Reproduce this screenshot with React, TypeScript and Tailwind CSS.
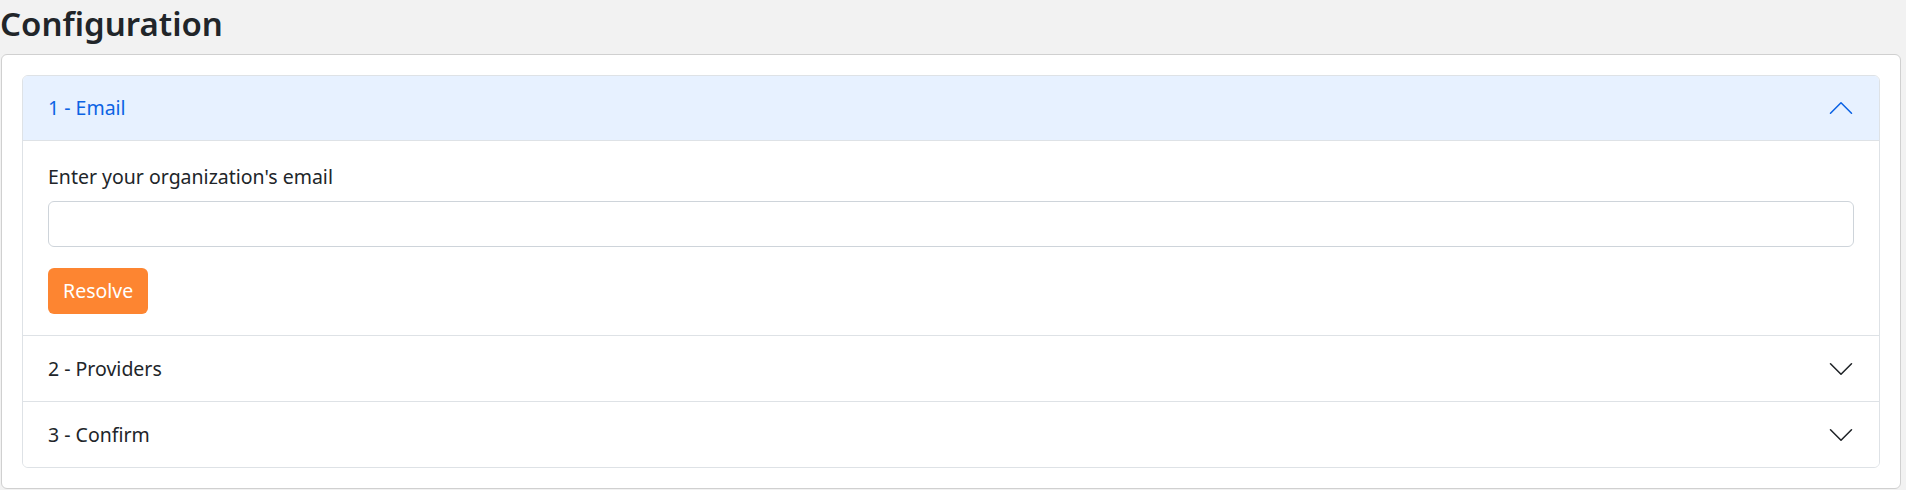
const sections = [
  { id: 1, title: '1 - Email', open: true },
  { id: 2, title: '2 - Providers', open: false },
  { id: 3, title: '3 - Confirm', open: false },
]

function Chevron({ up }: { up?: boolean }) {
  return (
    <svg
      viewBox="0 0 16 16"
      className={`h-[28px] w-[28px] shrink-0 ${up ? 'rotate-180 text-[#0c63e4]' : 'text-[#212529]'}`}
      fill="none"
      stroke="currentColor"
      strokeWidth={0.9}
      strokeLinecap="round"
      strokeLinejoin="round"
    >
      <path d="M2 5L8 11L14 5" />
    </svg>
  )
}

export default function App() {
  return (
    <div className="min-h-screen bg-[#f2f2f2] font-['Noto_Sans',sans-serif] text-[#212529]">
      <h2 className="mb-[7px] text-[33px] font-semibold leading-[47px]">Configuration</h2>

      <div className="ml-px mr-[5px] rounded-md border border-[#d0d0d0] bg-white p-5">
        <div className="overflow-hidden rounded-md border border-[#dee2e6]">
          {sections.map((s, i) => (
            <div key={s.id} className={i > 0 ? 'border-t border-[#dee2e6]' : ''}>
              <button
                className={`flex h-[65px] w-full items-center justify-between pl-[25px] pr-[24px] text-left text-[19.5px] ${
                  s.open ? 'border-b border-[#dee2e6] bg-[#e7f1ff] text-[#0c63e4]' : 'bg-white'
                }`}
              >
                <span>{s.title}</span>
                <Chevron up={s.open} />
              </button>

              {s.open && (
                <div className="px-[25px] pt-[21px] pb-[21px]">
                  <label className="mb-[10px] block text-[19.5px] leading-[29px]">Enter your organization's email</label>
                  <input
                    type="email"
                    className="block h-[46px] w-full rounded-md border border-[#ced4da] bg-white px-3 text-[19px]"
                  />
                  <button className="mt-[21px] h-[46px] rounded-md bg-[#fd8531] px-[15px] text-[19.5px] text-white">
                    Resolve
                  </button>
                </div>
              )}
            </div>
          ))}
        </div>
      </div>
    </div>
  )
}
